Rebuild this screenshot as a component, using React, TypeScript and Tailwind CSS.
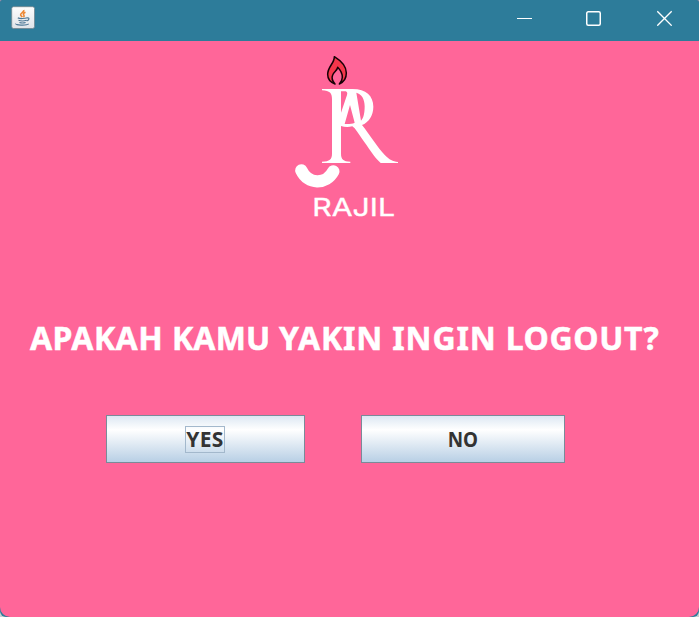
function JavaIcon() {
  return (
    <svg className="h-6 w-6" viewBox="0 0 24 24" fill="none">
      <defs>
        <linearGradient id="tile" x1="0" y1="0" x2="0" y2="1">
          <stop offset="0" stopColor="#fdfdfd" />
          <stop offset="1" stopColor="#dfe3e8" />
        </linearGradient>
      </defs>
      <rect x="0.7" y="0.7" width="22.8" height="21.8" rx="1.8" fill="url(#tile)" stroke="#71858f" strokeWidth="0.8" />
      <path d="M12.8 4c.9 2-3.7 2.900-3.200 4.800.2.900 1.200 1.400 1.700 2.300M14.500 6.300c-2 .8-2.600 1.900-1.600 2.900.6.800.2 1.400-.5 2" stroke="#ed8733" strokeWidth="1.600" />
      <path d="M6.800 11.900c2 .9 7 .8 9.500-.1M7.500 14.300c2.200.8 5.500.8 8 0M8.400 16.500c1.800.6 4.300.6 6.200 0M16 12c2.700-.8 2.500 2-.3 3M5 17.600c-1.500 1.600 10.500 2.200 12.700.3" stroke="#4d7896" strokeWidth="1.200" />
    </svg>
  );
}

function Logo() {
  return (
    <svg className="h-[180px] w-[130px]" viewBox="0 0 390 540" fill="none">
      <path
        d="M163 35C164 54 143 65 143 88C143 102 151 112 165 117C157 108 154 99 158 90C161 81 172 76 173 67C181 75 187 85 187 97C187 106 183 112 178 117C192 111 199 99 199 84C199 62 181 46 163 35Z"
        fill="#f5364b"
        stroke="#170006"
        strokeWidth="4.500"
        strokeLinejoin="round"
      />
      <g fill="#fff">
        <path
          d="M126 132H215C257 131 280 152 280 185C280 212 266 232 246 240C268 267 292 307 315 331C328 344 338 350 354 351V354H302C282 337 265 307 245 280C234 264 227 251 217 244C204 247 193 246 183 243V326C183 343 190 349 211 350V354H126V350C149 349 156 343 156 326V162C156 145 150 137 126 136ZM194 237C205 238 216 237 224 233L210 180ZM183 139L183 203L201 150C203 144 201 141 197 139ZM229 143L243 227C251 219 254 204 254 184C254 162 245 147 229 143Z"
          fillRule="evenodd"
        />
      </g>
      <path d="M64 376C84 419 138 420 160 379" stroke="#fff" strokeWidth="37" strokeLinecap="round" />
      <text x="97" y="513" fill="#fff" fontFamily="Inter, sans-serif" fontWeight="400" stroke="#fff" strokeWidth="1" fontSize="73" textLength="248" lengthAdjust="spacingAndGlyphs">
        RAJIL
      </text>
    </svg>
  );
}

function TitleBar() {
  return (
    <header className="flex h-[41px] shrink-0 items-start justify-between bg-[#2d7c9a] pt-1.5 pl-[11px] pr-[26px]">
      <JavaIcon />
      <div className="flex pt-[4px]">
        <svg className="h-4 w-4" viewBox="0 0 16 16" stroke="#fff" fill="none">
          <path d="M0 8.500H15" />
        </svg>
        <svg className="ml-[53px] h-4 w-4" viewBox="0 0 16 16" stroke="#fff" fill="none">
          <rect x="0.750" y="1.750" width="13.500" height="13.500" rx="1.500" strokeWidth="1.500" />
        </svg>
        <svg className="ml-[55px] h-4 w-4" viewBox="0 0 16 16" stroke="#fff" fill="none">
          <path d="M0.300 1.300L14.700 15.700M14.700 1.300L0.300 15.700" strokeWidth="1.300" />
        </svg>
      </div>
    </header>
  );
}

const buttonClass =
  "flex h-12 items-center justify-center border border-[#7a8a99] bg-[linear-gradient(to_bottom,#dde8f3_0%,#ffffff_30%,#b8cfe5_100%)] font-['Noto_Sans',sans-serif] text-[21px] font-bold text-[#333333]";

export default function App() {
  return (
    <div className="h-[617px] w-[699px] overflow-hidden bg-[#c8d0d2]">
      <div className="h-full overflow-hidden rounded-t-[2px] rounded-b-[6px] bg-[#2d7c9a]">
        <div className="flex h-full flex-col overflow-hidden rounded-b-[10px] bg-[#ff6699]">
          <TitleBar />
          <main className="flex flex-1 flex-col">
            <div className="flex h-[184px] pt-1 pl-[280px]">
              <Logo />
            </div>
            <h1 className="mt-[89px] pl-[30px] font-['Noto_Sans',sans-serif] text-[32px] leading-[48px] font-bold whitespace-nowrap text-white [-webkit-text-stroke:0.5px_white]">
              <span className="tracking-[0.45px]">APAKAH </span>
              <span className="tracking-[0.2px]">KAMU </span>
              <span className="tracking-[0.83px]">YAKIN </span>
              <span className="tracking-[0.83px]">INGIN </span>
              <span className="tracking-[0.6px]">LOGOUT?</span>
            </h1>
            <div className="mt-[53px] flex gap-[56px] pl-[106px]">
              <button className={`${buttonClass} w-[199px]`}>
                <span className="mr-px flex h-[27px] w-10 items-center justify-center border border-[#a3b8cc] pt-px tracking-[0.4px]">YES</span>
              </button>
              <button className={`${buttonClass} w-[204px]`}>
                <span className="inline-block scale-x-90 pt-px">NO</span>
              </button>
            </div>
          </main>
        </div>
      </div>
    </div>
  );
}
